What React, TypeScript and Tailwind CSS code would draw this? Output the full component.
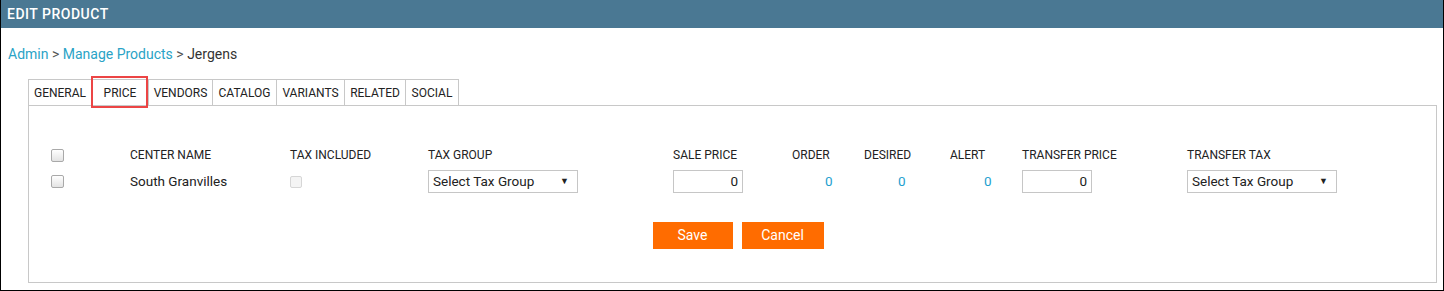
const tabs = [
  { label: "GENERAL", w: "w-[63px]" },
  { label: "PRICE", w: "w-[57px]" },
  { label: "VENDORS", w: "w-[64px]" },
  { label: "CATALOG", w: "w-[64px]" },
  { label: "VARIANTS", w: "w-[68px]" },
  { label: "RELATED", w: "w-[61px]" },
  { label: "SOCIAL", w: "w-[53px]" },
];

const cols =
  "grid grid-cols-[79px_160px_138px_245px_119px_72px_86px_72px_165px_1fr]";

function Check({ disabled }: { disabled?: boolean }) {
  return (
    <span
      className={
        disabled
          ? "block h-[12px] w-[12px] rounded-[2px] border border-[#d6d6d6] bg-[#f4f4f4]"
          : "block h-[13px] w-[13px] rounded-[2px] border border-[#a9a9a9] bg-gradient-to-b from-[#ffffff] to-[#e3e3e3]"
      }
    />
  );
}

function Select() {
  return (
    <div className="flex h-[23px] w-[150px] items-center justify-between border border-[#c6c6c6] bg-white pl-[4px] pr-[8px] text-[13.5px] text-[#222]">
      <span>Select Tax Group</span>
      <span className="text-[9px] text-[#222]">▼</span>
    </div>
  );
}

function NumInput() {
  return (
    <div className="flex h-[23px] w-[70px] items-center justify-end border border-[#c6c6c6] bg-white pr-[4px] text-[13.5px] text-[#222]">
      0
    </div>
  );
}

export default function App() {
  return (
    <div className="h-[291px] w-[1444px] overflow-hidden border-x border-b border-black bg-white font-['Roboto',sans-serif] text-[#333]">
      <div className="flex h-[28px] items-center bg-[#4a7893] px-[6px] text-[14px] font-medium tracking-[0.5px] text-white">
        EDIT PRODUCT
      </div>

      <div className="mt-[18px] px-[7px] text-[14px] leading-[16px]">
        <span className="text-[#2aa3c6]">Admin</span>
        <span className="text-[#555]"> &gt; </span>
        <span className="text-[#2aa3c6]">Manage Products</span>
        <span className="text-[#555]"> &gt; </span>
        <span className="text-[#333]">Jergens</span>
      </div>

      <div className="ml-[27px] mr-[6px] mt-[17px]">
        <div className="relative flex">
          <div className="flex border-l border-t border-[#c8c8c8]">
            {tabs.map((t) => (
              <div
                key={t.label}
                className={`${t.w} flex h-[25px] items-center justify-center border-r border-[#c8c8c8] text-[12px] text-[#222]`}
              >
                {t.label}
              </div>
            ))}
          </div>
          <div className="absolute left-[63px] top-[-3px] h-[32px] w-[57px] border-2 border-[#ec4545]" />
        </div>

        <div className="h-[178px] border border-[#c8c8c8] pl-[22px] pt-[40px]">
          <div className={`${cols} h-[16px] items-center text-[12px] text-[#222]`}>
            <Check />
            <span>CENTER NAME</span>
            <span>TAX INCLUDED</span>
            <span>TAX GROUP</span>
            <span>SALE PRICE</span>
            <span>ORDER</span>
            <span>DESIRED</span>
            <span>ALERT</span>
            <span>TRANSFER PRICE</span>
            <span>TRANSFER TAX</span>
          </div>

          <div className={`${cols} mt-[8px] h-[23px] items-center text-[13.5px] text-[#222]`}>
            <Check />
            <span>South Granvilles</span>
            <Check disabled />
            <Select />
            <NumInput />
            <span className="pl-[33px] text-[#1ea0cf]">0</span>
            <span className="pl-[34px] text-[#1ea0cf]">0</span>
            <span className="pl-[34px] text-[#1ea0cf]">0</span>
            <NumInput />
            <Select />
          </div>

          <div className="mt-[29px] flex justify-center gap-[9px] pr-[11px]">
            <button className="h-[27px] w-[80px] bg-[#ff6c00] text-[14px] text-white">
              Save
            </button>
            <button className="h-[27px] w-[82px] bg-[#ff6c00] text-[14px] text-white">
              Cancel
            </button>
          </div>
        </div>
      </div>
    </div>
  );
}
